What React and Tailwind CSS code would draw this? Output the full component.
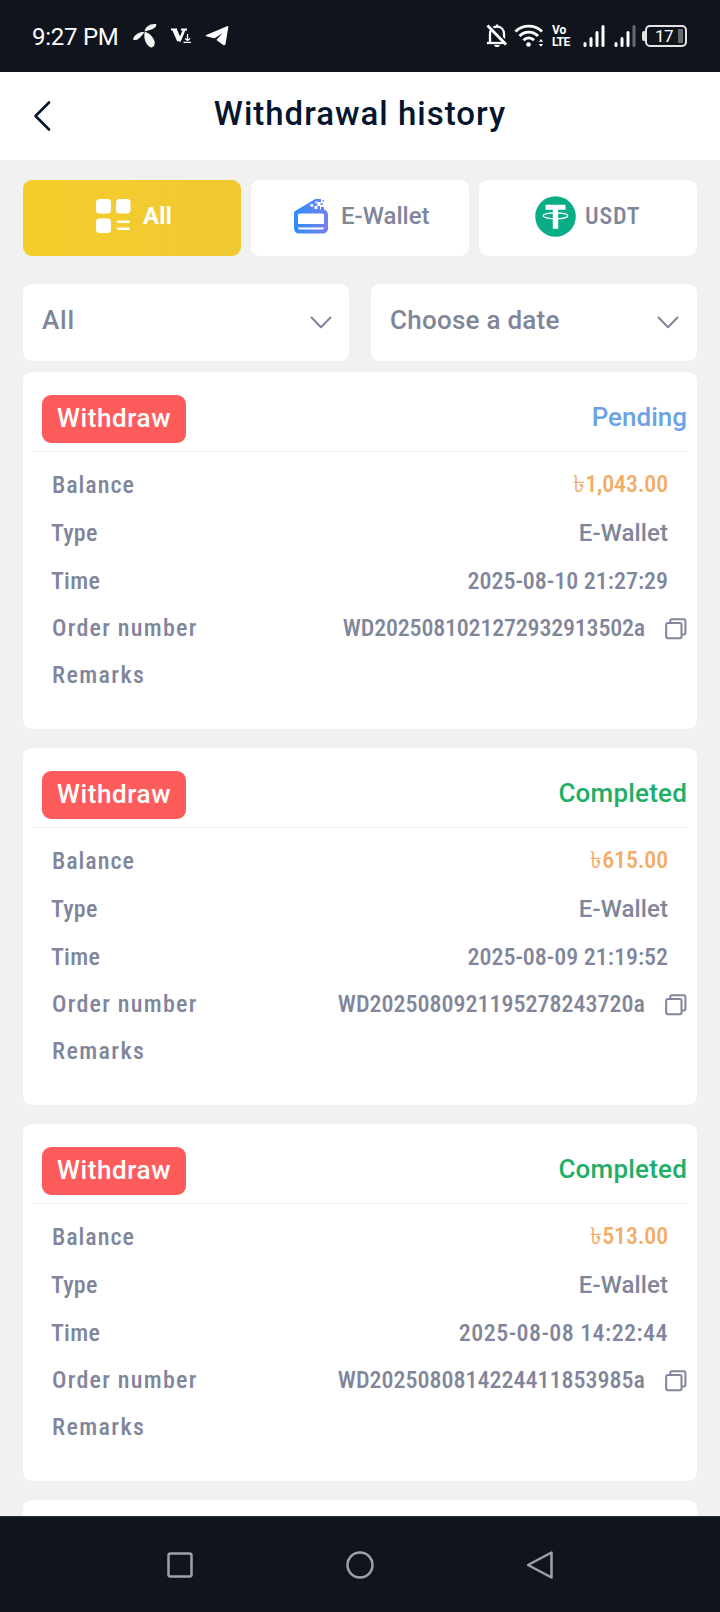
import React from "react";

const orders = [
  { status: "Pending", balance: "1,043.00", time: "2025-08-10 21:27:29", no: "WD2025081021272932913502a", noClass: "tracking-[-0.2px]" },
  { status: "Completed", balance: "615.00", time: "2025-08-09 21:19:52", no: "WD2025080921195278243720a", noClass: "" },
  { status: "Completed", balance: "513.00", time: "2025-08-08 14:22:44", no: "WD2025080814224411853985a", timeClass: "tracking-[0.45px]", noClass: "" },
];

function StatusBar() {
  return (
    <header className="flex h-[72px] shrink-0 items-center justify-between bg-[#10151d] pr-[33px] pl-8 text-white">
      <div className="flex items-center">
        <span className="pt-[2px] text-[24px] leading-none tracking-[-0.25px]">9:27 PM</span>
        <svg className="ml-[13px]" width="26" height="26" viewBox="0 0 26 26" fill="#f4f4f4">
          <path d="M12.6 8.600C13.200 3.600 18 .2 24.200 1c.8 3.600-3.600 5.600-11.600 7.600Z" />
          <path d="M12.300 9C8.500 8.500 2 11 1 16.500c3.600 2.200 8.500-2.500 11.300-7.500Z" />
          <path d="M12.800 8.800c-1.600 5.500.7 13.500 6 15.700 3.500.3 4.800-3.500 3.400-7.200-1.700-4.200-5.400-7.500-9.400-8.500Z" />
        </svg>
        <svg className="ml-[13px]" width="20" height="16" viewBox="0 0 20 16" fill="none" stroke="#fff">
          <path d="M0 1.500h6M10 1.500h6" strokeWidth="1.800" />
          <path d="M3.500 1.500 8.300 12.500" strokeWidth="4.400" />
          <path d="m8.300 13.500 5-12" strokeWidth="2.600" />
          <path d="M16.500 6v6M14 10.500l2.500 2 2.500-2M12.500 14.300h7.500" strokeWidth="1.300" />
        </svg>
        <svg className="ml-[14px]" width="24" height="22" viewBox="0 0 24 22" fill="#fff">
          <path d="M1.300 10.100 22 1.200c.8-.3 1.500.2 1.300 1.100l-2.800 16.800c-.2 1.200-1.200 1.500-2.200.9l-6.200-4.400c-.6-.4-.5-1 0-1.500l5.800-6.200-7.800 5c-.7.400-1.300.4-2 .2L1.200 11.200c-.7-.3-.6-.8.1-1.100Z" />
        </svg>
      </div>
      <div className="flex items-center">
        <svg className="-ml-px" width="22" height="24" viewBox="0 0 22 24" fill="none" stroke="#fff" strokeWidth="2.300">
          <path d="M4 18.500V10c0-4.300 2.800-7.300 7-7.300s7 3 7 7.300v8.500" />
          <path d="M1 19h20" />
          <path d="M11 .5v2" />
          <path d="M8 21h6c-.5 1.400-1.500 2-3 2s-2.500-.6-3-2Z" fill="#fff" stroke="none" />
          <path d="m3.500 1 18 18" stroke="#10151d" strokeWidth="2" />
          <path d="m1.500 1.500 18.500 19" strokeWidth="2.800" />
        </svg>
        <svg className="ml-[6px]" width="30" height="24" viewBox="0 0 30 24" fill="none" stroke="#fff" strokeWidth="2.800">
          <path d="M1.500 7.500c7-7.300 19.500-7.300 26.500 0" />
          <path d="M5.500 12c5-5.300 13.500-5.300 18.500 0" />
          <path d="M9.500 16.200c3-3 7.500-3 10.500 0" />
          <circle cx="14.500" cy="20.500" r="2.300" fill="#fff" stroke="none" />
          <path d="m27 15 2.200 2.800h-4.400ZM27 22.800l2.200-2.800h-4.400Z" fill="#fff" stroke="none" />
        </svg>
        <div className="ml-[8px] flex w-[22px] flex-col text-[12px] leading-[12px] font-bold">
          <span>Vo</span>
          <span className="tracking-[-0.6px]">LTE</span>
        </div>
        <svg className="ml-[9px]" width="22" height="24" viewBox="0 0 22 24" stroke="#fff" strokeWidth="3" strokeLinecap="round">
          <path d="M2 19.500v2M8 14.500v7M14 8.500v13M20 2.500v19" />
        </svg>
        <svg className="ml-[9px]" width="22" height="24" viewBox="0 0 22 24" stroke="#fff" strokeWidth="3" strokeLinecap="round">
          <path d="M2 19.500v2M8 14.500v7M14 8.500v13" />
          <path d="M20 2.500v19" stroke="#66696d" />
        </svg>
        <div className="ml-[6px] flex items-center">
          <span className="h-[10px] w-[3px] rounded-l-[2px] bg-[#e4e4e4]" />
          <div className="flex h-[22px] w-[42px] items-center justify-end rounded-[5px] border-2 border-[#e4e4e4] pr-[2px]">
            <span className="text-[17px] leading-none tracking-[-0.5px]">17</span>
            <span className="ml-[5px] h-[14px] w-[5px] bg-[#66696d]" />
          </div>
        </div>
      </div>
    </header>
  );
}

function Chevron() {
  return (
    <svg width="22" height="13" viewBox="0 0 22 13" fill="none" stroke="#80859a" strokeWidth="2" strokeLinecap="round" strokeLinejoin="round">
      <path d="m1.500 1.500 9.500 9.800 9.500-9.800" />
    </svg>
  );
}

function CopyIcon() {
  return (
    <svg width="22" height="22" viewBox="0 0 22 22" fill="none" stroke="#80859a" strokeWidth="2" strokeLinejoin="round">
      <rect x="1.200" y="5" width="15.300" height="15.300" rx="1.800" />
      <path d="M5.300 5V2.700c0-1 .6-1.500 1.500-1.500h12c1 0 1.600.6 1.600 1.600v12c0 1-.6 1.600-1.600 1.600h-2.300" />
    </svg>
  );
}

function Tabs() {
  return (
    <nav className="grid h-[76px] shrink-0 grid-cols-3 gap-[10px] text-[24px] text-[#80859a]">
      <button className="flex items-center rounded-[9px] bg-linear-to-r from-[#f5cd2b] to-[#f0c933] pb-[4px] pl-[73px] font-bold text-white">
        <svg width="35" height="34" viewBox="0 0 35 34" fill="#fff">
          <rect width="15" height="14.500" rx="3.500" />
          <rect x="20" width="14.500" height="14.500" rx="3.500" />
          <rect y="19.500" width="15" height="14.500" rx="3.500" />
          <rect x="21" y="21.500" width="13" height="2.500" rx="1.200" />
          <rect x="21" y="28.500" width="13" height="2.500" rx="1.200" />
        </svg>
        <span className="ml-[12px]">All</span>
      </button>
      <button className="flex items-center rounded-[9px] bg-white pb-[4px] pl-[43px] font-medium">
        <svg width="34" height="36" viewBox="0 0 34 36">
          <defs>
            <linearGradient id="wallet" x1="0" x2="1" y1="0" y2="0">
              <stop stopColor="#2b8ef8" />
              <stop offset="1" stopColor="#7880ee" />
            </linearGradient>
          </defs>
          <path fill="url(#wallet)" fillRule="evenodd" d="M0 15Q0 13.500 1.500 12.700L20 1.800Q22 .3 24.500 1L23 8l3 3.500h2.500c3.500 0 5.500 2 5.500 5.500v13c0 3.500-2 5.500-5.500 5.500h-23C2 35.500 0 33.500 0 30ZM6 15.500c-1.300 0-2 .7-2 2V26h26v-8.500c0-1.300-.7-2-2-2ZM4 29.500c0 1.300.7 2 2 2h22c1.300 0 2-.7 2-2Z" />
          <path fill="#4f86f8" d="M24 1h3v3h-3zM27 9h3v3h-3zM22 8h4v4h-4z" />
          <path fill="#6b82f2" d="M26.500 5h2v2h-2zM28.500 2h1.500v1.500h-1.500z" />
          <path fill="#fff" d="M16.500 6h2.800v2.800h-2.800zM20.500 8h3v3h-3zM21.500 3.500h2v2h-2z" />
        </svg>
        <span className="ml-[13px]">E-Wallet</span>
      </button>
      <button className="flex items-center rounded-[9px] bg-white pb-[4px] pl-[56px] font-medium">
        <svg width="41" height="41" viewBox="0 0 41 41">
          <circle cx="20.500" cy="20.500" r="20.300" fill="#09ad86" />
          <path fill="#fff" d="M10.500 8.800h20v5h-7.300v19h-5.400v-19h-7.300Z" />
          <ellipse cx="20.500" cy="19.800" rx="12.300" ry="3" fill="none" stroke="#fff" strokeWidth="1.300" />
        </svg>
        <span className="ml-[9px] tracking-[0.8px] font-stretch-semi-condensed">USDT</span>
      </button>
    </nav>
  );
}

function Filters() {
  return (
    <div className="mt-7 grid h-[77px] shrink-0 grid-cols-2 gap-[22px] text-[26px] font-medium tracking-[0.25px] text-[#80859a]">
      <button className="flex items-center justify-between rounded-[9px] bg-white pr-[17px] pb-[4px] pl-[19px]">
        <span className="tracking-[0.8px]">All</span>
        <span className="pt-[4px]"><Chevron /></span>
      </button>
      <button className="flex items-center justify-between rounded-[9px] bg-white pr-[18px] pb-[4px] pl-[19px]">
        <span>Choose a date</span>
        <span className="pt-[4px]"><Chevron /></span>
      </button>
    </div>
  );
}

function OrderCard({ order }) {
  const tone = order.status === "Pending" ? "text-[#6da3e4]" : "text-[#1fae68] tracking-[0.2px]";
  return (
    <article className="h-[356.5px] shrink-0 rounded-[9px] bg-white px-[10px] pt-[23px]">
      <div className="flex h-[57px] items-start justify-between border-b border-[#f0f0f1] pl-[9px]">
        <span className="flex h-12 w-36 items-center justify-center rounded-[9px] bg-[#fe5c5c] pb-[2px] text-[26px] font-medium tracking-[0.6px] text-white">Withdraw</span>
        <span className={"mt-[2px] text-[26px] leading-10 font-medium " + tone}>{order.status}</span>
      </div>
      <dl className="pt-[9px] pr-[19px] pl-[19px] text-[24px] font-medium text-[#80859a] font-stretch-semi-condensed">
        <div className="flex h-12 items-center justify-between">
          <dt className="tracking-[0.95px]">Balance</dt>
          <dd className="pb-[2px] tracking-[-0.15px] text-[#f4ab63]">৳{order.balance}</dd>
        </div>
        <div className="flex h-12 items-center justify-between">
          <dt className="-ml-px tracking-[0.3px]">Type</dt>
          <dd className="tracking-[0.1px] font-stretch-normal">E-Wallet</dd>
        </div>
        <div className="flex h-[47px] items-center justify-between">
          <dt className="-ml-px tracking-[0.3px]">Time</dt>
          <dd className={order.timeClass}>{order.time}</dd>
        </div>
        <div className="-mr-[19px] flex h-[47px] items-center">
          <dt className="tracking-[1.25px]">Order number</dt>
          <dd className={"ml-auto " + order.noClass}>{order.no}</dd>
          <button className="mt-[3px] ml-[20px]" aria-label="Copy"><CopyIcon /></button>
        </div>
        <div className="flex h-[47px] items-center">
          <dt className="tracking-[1.4px]">Remarks</dt>
        </div>
      </dl>
    </article>
  );
}

export default function App() {
  return (
    <div className="flex h-[1612px] w-[720px] flex-col overflow-hidden bg-[#f1f1ef] font-['Roboto',sans-serif]">
      <StatusBar />
      <div className="grid h-[88px] shrink-0 grid-cols-[80px_1fr_80px] items-center bg-white text-[#05152f]">
        <svg className="ml-[33px]" width="19" height="30" viewBox="0 0 19 30" fill="none" stroke="#05152f" strokeWidth="2.600" strokeLinecap="round" strokeLinejoin="round">
          <path d="M16 1.500 2.500 15 16 28.500" />
        </svg>
        <h1 className="pb-[5px] text-center text-[33px] font-medium tracking-[1px]">Withdrawal history</h1>
      </div>
      <main className="flex min-h-0 flex-1 flex-col overflow-hidden px-[23px] pt-5">
        <Tabs />
        <Filters />
        <section className="mt-[11px] flex flex-col gap-[19.5px]">
          {orders.map((o) => <OrderCard key={o.no} order={o} />)}
          <div className="h-10 shrink-0 rounded-t-[9px] bg-white" />
        </section>
      </main>
      <footer className="grid h-24 shrink-0 grid-cols-3 items-center border-t border-[#2a2e35] bg-[#10151d] px-[90px]">
        <svg className="mx-auto" width="26" height="26" viewBox="0 0 26 26" fill="none" stroke="#9fa1a4" strokeWidth="2.500">
          <rect x="1.500" y="1.500" width="23" height="23" rx="2" />
        </svg>
        <svg className="mx-auto" width="28" height="28" viewBox="0 0 28 28" fill="none" stroke="#9fa1a4" strokeWidth="2.500">
          <circle cx="14" cy="14" r="12.500" />
        </svg>
        <svg className="mx-auto" width="28" height="28" viewBox="0 0 28 28" fill="none" stroke="#9fa1a4" strokeWidth="2.500" strokeLinejoin="round">
          <path d="M25.500 1.500v25L2 14Z" />
        </svg>
      </footer>
    </div>
  );
}
